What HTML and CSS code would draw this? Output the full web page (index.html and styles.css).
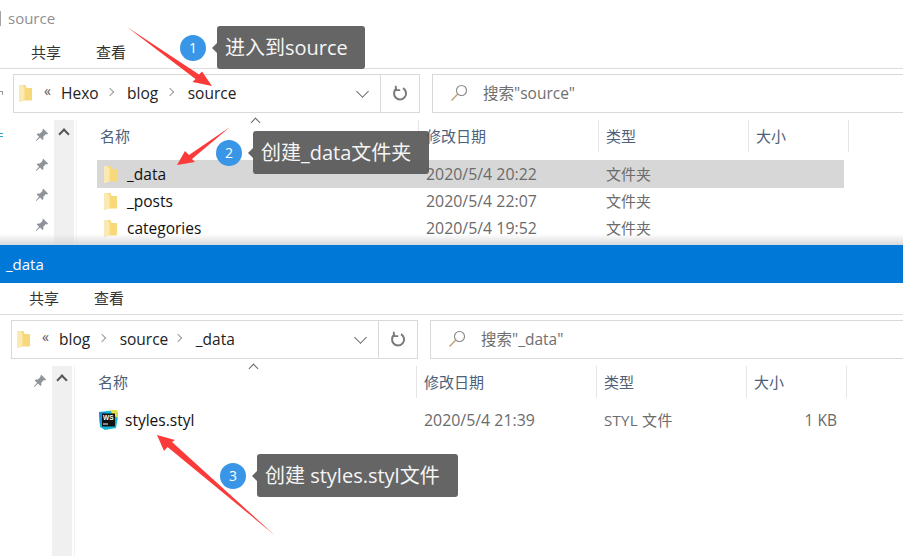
FILE: index.html
```html
<!DOCTYPE html>
<html lang="zh-CN">
<head>
<meta charset="utf-8">
<title>source / _data</title>
<link rel="stylesheet" href="styles.css">
</head>
<body>
<svg class="defs" width="0" height="0" aria-hidden="true">
  <defs>
    <symbol id="folder" viewBox="0 0 13 18">
      <path d="M0 1h6.500l1 3H13v12.500H2.500L0 18z" fill="#f8d979"/>
      <path d="M0 1h3.500l2 2.500v13L1 18H0z" fill="#fbe9b4"/>
    </symbol>
    <symbol id="pin" viewBox="0 0 14 14">
      <path d="M8.300 .8l4.900 4.900-1.400.7-.9-.3-2.600 2.600.1 2.200-1 1-2.300-2.300L1.300 13l-.5-.4 3.300-3.900L1.700 6.400l1-1 2.200.1 2.600-2.600-.2-.9z" fill="#8e939a"/>
    </symbol>
    <symbol id="search" viewBox="0 0 18 18">
      <circle cx="11.500" cy="6.500" r="5" fill="none" stroke="#858585" stroke-width="1.100"/>
      <path d="M7.800 10L1.500 16.500" fill="none" stroke="#c0a078" stroke-width="1.400"/>
    </symbol>
    <symbol id="refresh" viewBox="0 0 16 16">
      <path d="M11 3.200A6 6 0 1 1 4.800 3.400" fill="none" stroke="#7a7a7a" stroke-width="2"/>
      <path d="M3.800 .8v4.400h4.400" fill="none" stroke="#7a7a7a" stroke-width="1.800"/>
    </symbol>
  </defs>
</svg>

<main class="desktop">
  <section class="window">
    <header class="titlebar"><span class="title-bar-mark"></span><span class="title-text">source</span></header>
    <nav class="tabs"><span class="tab">共享</span><span class="tab">查看</span></nav>
    <div class="addressrow">
      <span class="back-frag"></span>
      <div class="address">
        <svg class="crumb-folder"><use href="#folder"/></svg>
        <span class="double">«</span>
        <span class="crumb crumb-tight">Hexo</span><span class="sep"></span>
        <span class="crumb">blog</span><span class="sep"></span>
        <span class="crumb">source</span>
        <span class="drop"></span>
        <span class="refresh"><svg class="refresh-icon"><use href="#refresh"/></svg></span>
      </div>
      <div class="search"><svg class="search-icon"><use href="#search"/></svg><span>搜索"source"</span></div>
    </div>
    <div class="body">
      <aside class="side">
        <span class="frag"></span>
        <div class="pins">
          <svg class="pin"><use href="#pin"/></svg>
          <svg class="pin"><use href="#pin"/></svg>
          <svg class="pin"><use href="#pin"/></svg>
          <svg class="pin"><use href="#pin"/></svg>
        </div>
      </aside>
      <div class="scrollbar"><span class="up"></span></div>
      <div class="list">
        <div class="head">
          <span class="h">名称<i class="sort"></i></span><span class="h">修改日期</span><span class="h">类型</span><span class="h">大小</span>
        </div>
        <div class="row selected"><span class="name"><svg class="ficon"><use href="#folder"/></svg>_data</span><span class="date">2020/5/4 20:22</span><span class="type">文件夹</span><span></span></div>
        <div class="row"><span class="name"><svg class="ficon"><use href="#folder"/></svg>_posts</span><span class="date">2020/5/4 22:07</span><span class="type">文件夹</span><span></span></div>
        <div class="row"><span class="name"><svg class="ficon"><use href="#folder"/></svg>categories</span><span class="date">2020/5/4 19:52</span><span class="type">文件夹</span><span></span></div>
      </div>
    </div>
    <div class="fade"></div>
  </section>

  <section class="window second">
    <header class="titlebar active"><span class="title-text">_data</span></header>
    <nav class="tabs"><span class="tab">共享</span><span class="tab">查看</span></nav>
    <div class="addressrow">
      <div class="address">
        <svg class="crumb-folder"><use href="#folder"/></svg>
        <span class="double">«</span>
        <span class="crumb">blog</span><span class="sep"></span>
        <span class="crumb crumb-tight2">source</span><span class="sep"></span>
        <span class="crumb">_data</span>
        <span class="drop"></span>
        <span class="refresh"><svg class="refresh-icon"><use href="#refresh"/></svg></span>
      </div>
      <div class="search"><svg class="search-icon"><use href="#search"/></svg><span>搜索"_data"</span></div>
    </div>
    <div class="body">
      <aside class="side">
        <div class="pins"><svg class="pin"><use href="#pin"/></svg></div>
      </aside>
      <div class="scrollbar"><span class="up"></span></div>
      <div class="list">
        <div class="head">
          <span class="h">名称<i class="sort"></i></span><span class="h">修改日期</span><span class="h">类型</span><span class="h">大小</span>
        </div>
        <div class="row">
          <span class="name">
            <svg class="ws" viewBox="0 0 20 20">
              <path d="M1 2L19 0l1 7-2 11-11 2-5-3z" fill="#12b5d8"/>
              <path d="M12 0l7 0 1 8-5-3z" fill="#e7e04a"/>
              <path d="M1 2l7 0-3 8-3 5z" fill="#1c8fd6"/>
              <rect x="4" y="3.500" width="13" height="13" fill="#111"/>
              <text x="5" y="10" class="ws-text">WS</text>
              <rect x="5" y="13.500" width="5" height="1" fill="#fff"/>
            </svg>styles.styl</span>
          <span class="date">2020/5/4 21:39</span><span class="type styl">STYL 文件</span><span class="size">1 KB</span>
        </div>
      </div>
    </div>
  </section>

  <svg class="arrows" viewBox="0 0 903 556" aria-hidden="true">
    <path d="M127 27L199 74.500 202 71.500 212 86 192.500 82 195.500 79z" fill="#fb3a3a"/>
    <path d="M230 127L192 159 195 162 177 165 185 151 189 155z" fill="#fb3a3a"/>
    <path d="M274.500 535L172 442 175 440 157 435 164 451 167.500 447z" fill="#fb3a3a"/>
  </svg>

  <div class="note note-1"><span class="num">1</span><span class="bubble">进入到source</span></div>
  <div class="note note-2"><span class="num">2</span><span class="bubble">创建_data文件夹</span></div>
  <div class="note note-3"><span class="num">3</span><span class="bubble">创建 styles.styl文件</span></div>
</main>
</body>
</html>
```
FILE: styles.css
```css
* { box-sizing: border-box; }
html, body { margin: 0; padding: 0; background: #fff; }
body {
  width: 903px; height: 556px; overflow: hidden;
  font-family: "Open Sans", "Noto Sans CJK SC", sans-serif;
  font-size: 15px; color: #1a1a1a;
}
.defs { position: absolute; }
.desktop { position: relative; width: 903px; height: 556px; overflow: hidden; }

.window { position: relative; width: 903px; height: 245px; overflow: hidden; background: #fff; }
.window.second { width: 905px; height: 311px; margin-left: -2px; }

.titlebar { height: 38px; display: flex; align-items: center; color: #8f8f8f; font-size: 15px; padding-bottom: 2px; }
.title-bar-mark { width: 1px; height: 15px; background: #a5a5a5; margin-right: 7px; }
.titlebar.active { background: #0078d7; color: #fff; padding: 0 0 0 8px; }

.tabs {
  height: 31px; display: flex; gap: 35px; align-items: center;
  padding: 0 0 4px 31px; border-bottom: 1px solid #dcdcdc;
  font-family: "Noto Sans CJK SC", sans-serif; font-size: 15px; color: #333;
}
.second .tabs { height: 32px; padding-bottom: 3px; }

.addressrow { height: 51px; padding: 5px 0 0 13px; display: flex; gap: 12px; align-items: flex-start; position: relative; }
.back-frag {
  position: absolute; left: 0; top: 22px; width: 3px; height: 4px;
  border-top: 1px solid #999; border-right: 1px solid #999;
}
.address {
  width: 407px; height: 39px; border: 1px solid #d9d9d9;
  display: flex; align-items: center; padding: 0 0 2px 5px; font-size: 15.5px; color: #222;
}
.crumb-folder { width: 13px; height: 18px; margin-right: 12px; flex: none; }
.double { width: 17px; margin-top: -4px; color: #555; font-size: 14px; }
.crumb { white-space: nowrap; }
.crumb-tight { margin-right: -1px; }
.crumb-tight2 { margin-right: -2px; }
.sep {
  width: 6px; height: 6px; margin: -2px 14.500px 0 9px; flex: none;
  border-top: 1.500px solid #9a9a9a; border-right: 1.500px solid #9a9a9a; transform: rotate(45deg);
}
.drop {
  margin-left: auto; margin-right: 13px; margin-top: -3px; width: 9px; height: 9px;
  border-right: 1.500px solid #666; border-bottom: 1.500px solid #666; transform: rotate(45deg);
}
.refresh {
  width: 39px; height: 37px; margin-bottom: -2px; border-left: 1px solid #d9d9d9;
  display: flex; align-items: center; justify-content: center; padding-bottom: 1px;
}
.refresh-icon { width: 16px; height: 16px; }
.search {
  flex: 1; height: 39px; border: 1px solid #d9d9d9; border-right: 0;
  display: flex; align-items: center; padding: 0 0 2px 17px; gap: 15px;
  font-size: 15.500px; color: #6f6f6f;
}
.search-icon { width: 18px; height: 18px; flex: none; }

.body { display: flex; height: 200px; }
.side { width: 54px; position: relative; padding-top: 8px; flex: none; }
.frag {
  position: absolute; left: 0; top: 13px; width: 3px; height: 4px;
  border-top: 1px solid #35a4c4; border-bottom: 1px solid #35a4c4;
}
.pins { display: flex; flex-direction: column; gap: 16px; align-items: flex-end; padding-right: 5px; }
.pin { width: 14px; height: 14px; }
.scrollbar { width: 20px; background: #f0f0f0; flex: none; padding-top: 7px; display: flex; justify-content: center; height: 300px; }
.up {
  width: 8px; height: 8px; margin-top: 3px;
  border-top: 2px solid #555; border-left: 2px solid #555; transform: rotate(45deg);
}
.list { flex: 1; margin-left: 2px; border-left: 1px solid #f2f2f2; padding-left: 20px; }

.head { display: grid; grid-template-columns: 321px 180px 150px 101px; width: 752px; height: 32px; align-items: center; margin-bottom: 8px; position: relative; }
.h {
  height: 32px; line-height: 32px; padding-left: 7px; border-left: 1px solid #e5e5e5;
  font-family: "Noto Sans CJK SC", sans-serif; font-size: 15px; color: #4c607a;
}
.h:first-child { border-left: 0; padding-left: 3px; }
.h:last-child { border-right: 1px solid #e5e5e5; }
.sort {
  position: absolute; left: 155px; top: -1px; width: 7px; height: 7px;
  border-top: 1px solid #666; border-left: 1px solid #666; transform: rotate(45deg);
}

.row { display: grid; width: 747px; height: 27px; padding-top: 1px; align-items: center; grid-template-columns: 329px 180px 238px; white-space: nowrap; }
.row.selected { background: #d7d7d7; height: 28px; padding-top: 2px; }
.second .row { grid-template-columns: 329px 180px 150px 88px; height: 28px; padding-top: 0; }
.name { display: flex; align-items: center; padding-left: 7px; color: #111; font-size: 15.500px; }
.ficon { width: 13px; height: 18px; margin-right: 10px; flex: none; }
.date { color: #6b6b6b; font-size: 15.900px; }
.type { color: #6b6b6b; font-family: "Noto Sans CJK SC", sans-serif; font-size: 15px; margin-bottom: 1px; }
.styl { font-family: "Open Sans", "Noto Sans CJK SC", sans-serif; letter-spacing: .3px; margin-bottom: 2px; }
.ws { width: 20px; height: 20px; margin-left: -4px; margin-right: 7px; flex: none; }
.ws-text { font-family: "Liberation Sans", sans-serif; font-size: 6.500px; font-weight: 700; fill: #fff; }
.size { color: #6b6b6b; font-size: 15.500px; text-align: right; padding-right: 5px; }

.fade {
  position: absolute; left: 0; right: 0; bottom: 0; height: 11px;
  background: linear-gradient(rgba(225,225,225,0), rgba(215,215,215,.95));
}

.arrows { position: absolute; left: 0; top: 0; width: 903px; height: 556px; pointer-events: none; }

.note { position: absolute; display: flex; align-items: center; }
.note-1 { left: 180px; top: 26px; }
.note-2 { left: 216px; top: 131px; }
.note-3 { left: 220px; top: 454px; }
.num {
  width: 26px; height: 26px; border-radius: 50%; background: #3996e6; color: #fff;
  display: flex; align-items: center; justify-content: center; font-size: 14px; margin-right: 11px; flex: none;
}
.bubble {
  position: relative; height: 43px; line-height: 43px; border-radius: 3px;
  background: rgba(88,88,88,.92); color: #f5f5f5; font-size: 20px; padding: 0 8px; white-space: nowrap;
}
.note-1 .bubble { width: 148px; }
.note-2 .bubble { width: 176px; }
.note-3 .bubble { width: 201px; }
.bubble::before {
  content: ""; position: absolute; left: -5px; top: 17px;
  border-top: 5px solid transparent; border-bottom: 5px solid transparent; border-right: 5px solid rgba(88,88,88,.92);
}
```
